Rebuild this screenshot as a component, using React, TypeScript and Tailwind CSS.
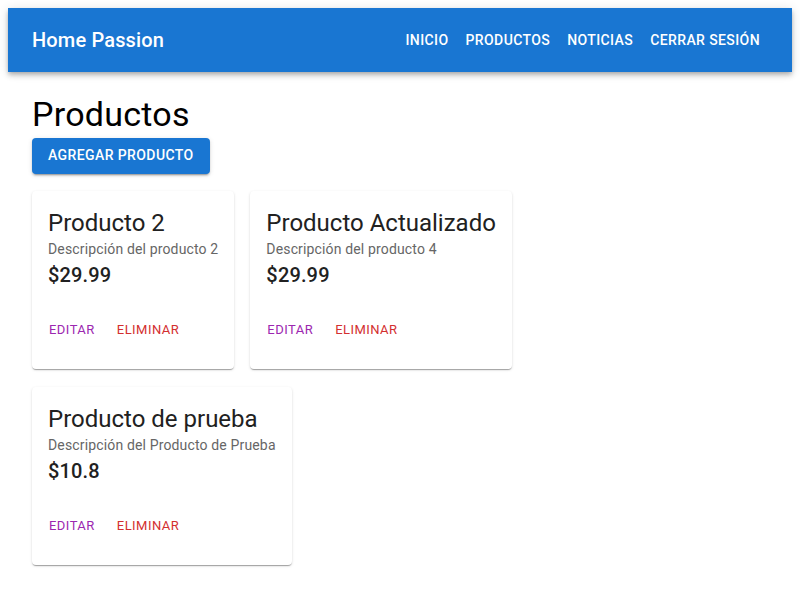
import React from 'react';

const products = [
  { name: 'Producto 2', description: 'Descripción del producto 2', price: '$29.99' },
  { name: 'Producto Actualizado', description: 'Descripción del producto 4', price: '$29.99' },
  { name: 'Producto de prueba', description: 'Descripción del Producto de Prueba', price: '$10.8' },
];

const navItems = ['Inicio', 'Productos', 'Noticias', 'Cerrar sesión'];

const App: React.FC = () => {
  return (
    <div className="min-h-screen bg-white p-2 font-['Roboto',sans-serif]">
      <header className="flex h-16 items-center justify-between bg-[#1976d2] px-6 text-white shadow-[0_2px_4px_-1px_rgba(0,0,0,0.2),0_4px_5px_0_rgba(0,0,0,0.14),0_1px_10px_0_rgba(0,0,0,0.12)]">
        <h1 className="text-[20px] font-medium leading-[1.6] tracking-[0.15px]">Home Passion</h1>
        <nav className="flex gap-px">
          {navItems.map((item) => (
            <button
              key={item}
              className="rounded px-2 py-1.5 text-[14px] font-medium uppercase leading-[1.75] tracking-[0.4px] text-white"
            >
              {item}
            </button>
          ))}
        </nav>
      </header>

      <main className="px-6">
        <h2 className="mt-[22px] text-[34px] font-normal leading-[1.235] tracking-[0.25px] text-black">Productos</h2>
        <button className="mt-[2px] h-9 rounded bg-[#1976d2] px-4 text-[14px] font-medium uppercase tracking-[0.4px] text-white shadow-[0_3px_1px_-2px_rgba(0,0,0,0.2),0_2px_2px_0_rgba(0,0,0,0.14),0_1px_5px_0_rgba(0,0,0,0.12)]">
          Agregar producto
        </button>

        <div className="mt-[17px] flex flex-wrap items-start gap-x-4 gap-y-[18px]">
          {products.map((p) => (
            <div
              key={p.name}
              className="rounded bg-white p-4 pb-[24px] shadow-[0_2px_1px_-1px_rgba(0,0,0,0.2),0_1px_1px_0_rgba(0,0,0,0.14),0_1px_3px_0_rgba(0,0,0,0.12)]"
            >
              <h3 className="text-[24px] font-normal leading-[1.334] text-[#212121]">{p.name}</h3>
              <p className="text-[14px] leading-[1.43] tracking-[0.15px] text-[#666666]">{p.description}</p>
              <p className="text-[20px] font-medium leading-[1.6] tracking-[0.15px] text-[#212121]">{p.price}</p>
              <div className="mt-[24px] flex h-[30px] items-center gap-[22px] pl-px">
                <button className="text-[13px] font-normal uppercase tracking-[0.46px] text-[#9c27b0]">Editar</button>
                <button className="text-[13px] font-normal uppercase tracking-[0.46px] text-[#d32f2f]">Eliminar</button>
              </div>
            </div>
          ))}
        </div>
      </main>
    </div>
  );
};

export default App;
